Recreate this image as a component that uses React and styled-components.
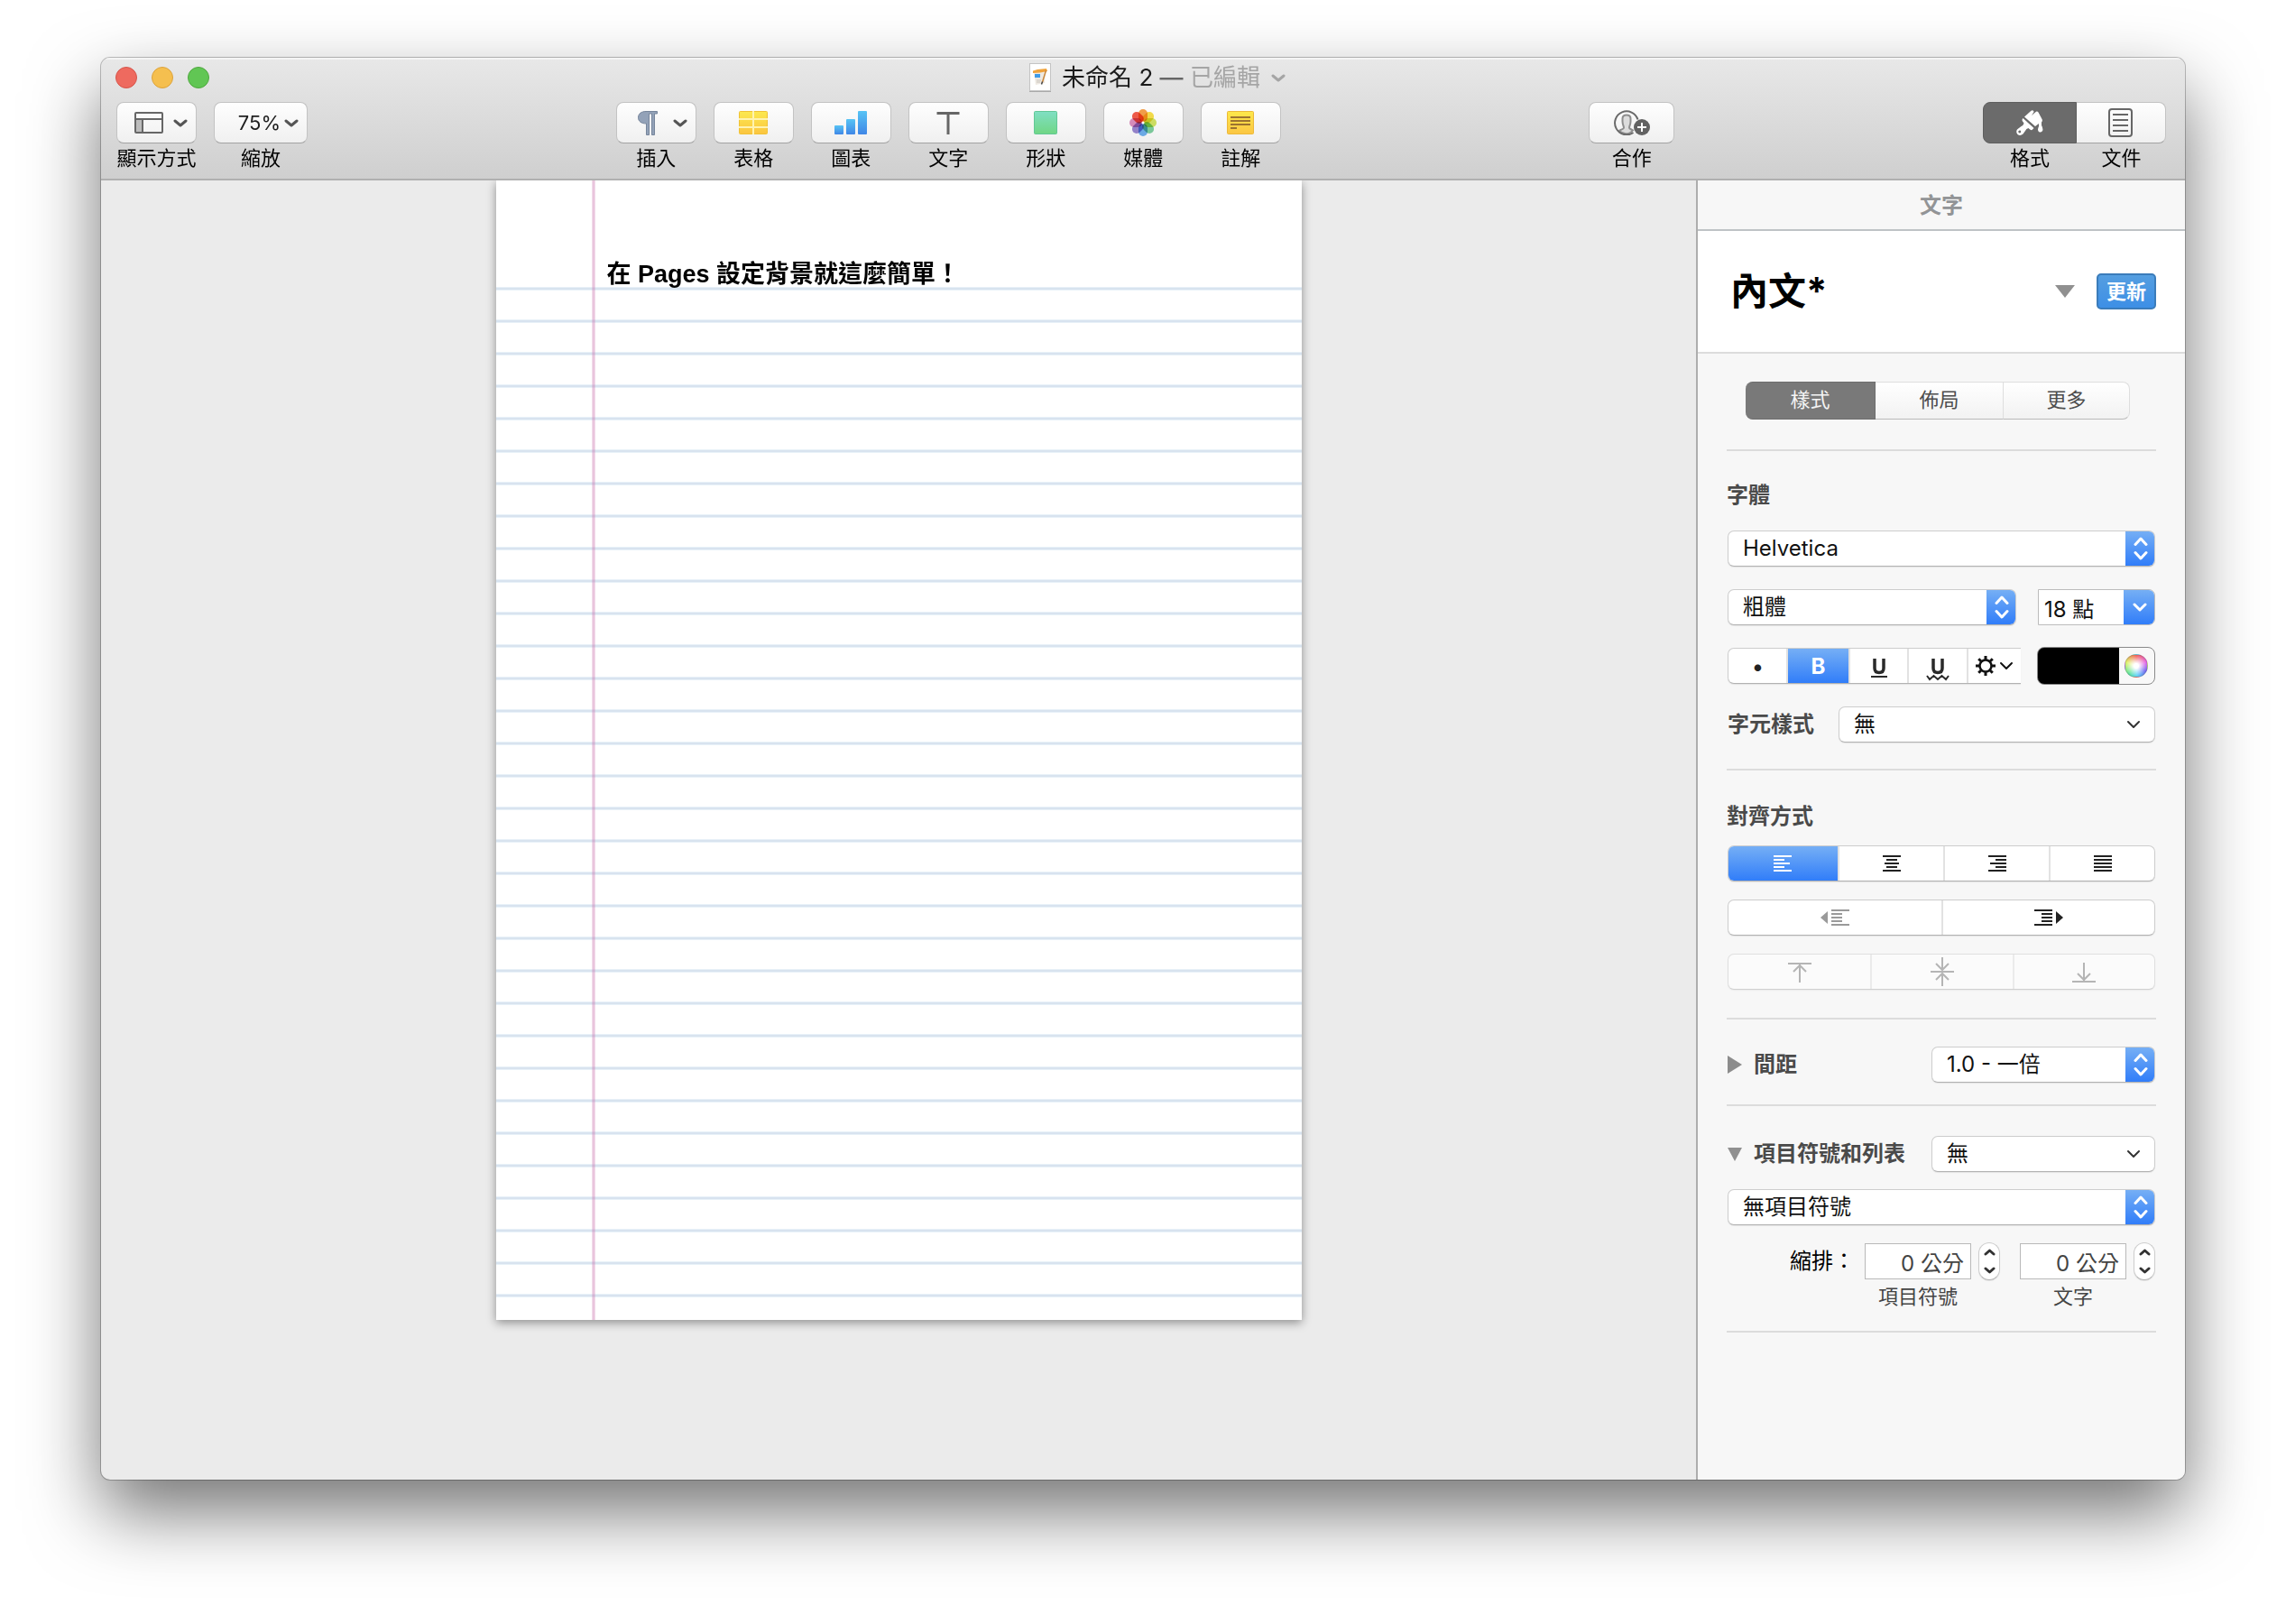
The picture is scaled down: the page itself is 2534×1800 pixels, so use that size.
import React, { useState } from 'react';
import styled, { createGlobalStyle, css } from 'styled-components';

const GlobalStyle = createGlobalStyle`
  * {
    box-sizing: border-box;
  }

  body {
    margin: 0;
    background: #fff;
    color: #000;
    font-family: Inter, "Noto Sans CJK TC", sans-serif;
    font-size: 24px;
  }

  button, select, input {
    margin: 0;
    padding: 0;
    border: none;
    background: transparent;
    color: inherit;
    font: inherit;
    outline: none;
  }

  svg {
    display: block;
    flex: none;
  }
`;

const blueFill = css`
  background: linear-gradient(#77b0f5, #2f7cf9);
  box-shadow: inset 0 1px 0 #6ba4ee, inset 0 -1px 0 #1f63ee;
`;

const controlEdge = css`
  background: #fff;
  border: 1px solid #cdcdcd;
  border-bottom-color: #b2b2b2;
  border-radius: 7px;
  box-shadow: 0 1px 1px rgba(0, 0, 0, 0.08);
`;

/* window */

const Desktop = styled.div`
  display: flex;
  min-height: 100vh;
  padding: 64px 112px 160px;
`;

const Window = styled.div`
  display: flex;
  flex-direction: column;
  flex: 1;
  min-width: 0;
  overflow: hidden;
  border-radius: 10px;
  background: #ebebeb;
  box-shadow: 0 0 0 1px rgba(0, 0, 0, 0.24), 0 36px 80px rgba(0, 0, 0, 0.55);
`;

const Header = styled.header`
  padding-bottom: 9px;
  background: linear-gradient(#e8e8e8, #cfcfcf);
  border-bottom: 2px solid #b0b0b0;
  box-shadow: inset 0 2px 0 #f4f4f4;
`;

const TitleBar = styled.div`
  display: grid;
  grid-template-columns: 1fr auto 1fr;
  align-items: center;
  height: 44px;
  padding: 0 16px;
`;

const Lights = styled.div`
  display: flex;
  gap: 16px;
`;

const Light = styled.button`
  width: 24px;
  height: 24px;
  border: 1px solid ${props => props.$edge};
  border-radius: 50%;
  background: ${props => props.$fill};
`;

const Title = styled.div`
  display: flex;
  align-items: center;
  gap: 12px;
  padding-left: 32px;
  font-size: 26px;
  line-height: 36px;
  color: #1a1a1a;
  white-space: pre;
`;

const Dash = styled.span`
  font-weight: 500;
  color: #666;
`;

const Edited = styled.span`
  color: #a5a5a5;
`;

const Toolbar = styled.div`
  display: flex;
  justify-content: space-between;
  padding: 5px 21px 0 17px;
`;

const ToolGroup = styled.div`
  display: flex;
  gap: ${props => props.$gap}px;
`;

const ToolItem = styled.div`
  display: flex;
  flex-direction: column;
  align-items: center;
  gap: 2px;
`;

const ToolButton = styled.button`
  display: flex;
  align-items: center;
  justify-content: ${props => (props.$menu ? 'flex-end' : 'center')};
  gap: ${props => props.$gap || 0}px;
  width: ${props => props.$width || 89}px;
  height: 46px;
  padding: ${props => (props.$menu ? '0 9px' : '0')};
  border: 1px solid #c3c3c3;
  border-bottom-color: #a3a3a3;
  border-radius: 8px;
  background: linear-gradient(#fefefe, #f0f0f0);
  font-size: 22px;
  line-height: 28px;
  color: #1e1e1e;

  ${props => props.$side === 'left' && css`
    border-color: #5e5e5e;
    border-radius: 8px 0 0 8px;
    background: #6b6b6b;
  `}
  ${props => props.$side === 'right' && css`
    border-left: none;
    border-radius: 0 8px 8px 0;
  `}
`;

const ToolLabel = styled.label`
  font-size: 22px;
  line-height: 28px;
  white-space: nowrap;
`;

/* document */

const Body = styled.div`
  display: flex;
  flex: 1;
`;

const Canvas = styled.main`
  display: flex;
  justify-content: center;
  align-items: flex-start;
  flex: 1;
  min-width: 0;
  overflow: hidden;
`;

const Paper = styled.article`
  width: 893px;
  height: 1263px;
  padding: 86px 40px 0 123px;
  background:
    linear-gradient(90deg, transparent 106px, rgba(200, 110, 170, 0.25) 106px, rgba(200, 110, 170, 0.25) 107px, rgba(200, 110, 170, 0.4) 107px, rgba(200, 110, 170, 0.4) 109px, rgba(200, 110, 170, 0.25) 109px, rgba(200, 110, 170, 0.25) 110px, transparent 110px),
    repeating-linear-gradient(#e8f1f8 0 1px, #d8e3ef 1px 3px, #e8f1f8 3px 4px, transparent 4px 36px) 0 118px no-repeat,
    #fff;
  box-shadow: 0 3px 10px rgba(0, 0, 0, 0.4);
`;

const Paragraph = styled.p`
  margin: 0;
  font-family: "Liberation Sans", "Noto Sans CJK TC", sans-serif;
  font-size: 27px;
  font-weight: 700;
  line-height: 36px;
`;

/* inspector */

const Inspector = styled.aside`
  flex: none;
  width: 542px;
  border-left: 2px solid #adadad;
  background: #f7f7f7;
`;

const InspectorTitle = styled.h2`
  height: 56px;
  margin: 0;
  border-bottom: 2px solid #bfc3c6;
  font-size: 24px;
  font-weight: 700;
  line-height: 56px;
  text-align: center;
  color: #929496;
`;

const StyleBar = styled.div`
  display: flex;
  align-items: center;
  height: 136px;
  padding: 0 32px 0 36px;
  border-bottom: 2px solid #dcdcdc;
  background: #fff;
`;

const StyleName = styled.span`
  flex: 1;
  font-size: 42px;
  font-weight: 700;
  line-height: 60px;
`;

const UpdateButton = styled.button`
  width: 66px;
  height: 40px;
  margin-left: 24px;
  border: 2px solid #3b7cba;
  border-radius: 5px;
  background: linear-gradient(#559ee0, #3d8fe6);
  font-size: 22px;
  font-weight: 700;
  line-height: 32px;
  color: #fff;
`;

const Panel = styled.div`
  padding: 0 32px;
`;

const Tabs = styled.div`
  display: grid;
  grid-template-columns: 144px 142px 1fr;
  margin: 31px 29px 33px 21px;
`;

const Tab = styled.button`
  height: 42px;
  padding-bottom: 3px;
  border: 1px solid #dedede;
  border-bottom-color: #bababa;
  border-left-width: 0;
  background: linear-gradient(#fff, #f2f2f2);
  font-size: 22px;
  line-height: 36px;
  color: #4d4d4d;

  &:first-child {
    border-radius: 8px 0 0 8px;
  }

  &:last-child {
    border-radius: 0 8px 8px 0;
  }

  ${props => props.$active && css`
    border-color: #6e6e6e;
    background: #797979;
    color: #f4f4f4;
  `}
`;

const Section = styled.section`
  padding: ${props => props.$pad};
  border-top: 2px solid #dcdcdc;
`;

const Heading = styled.h3`
  margin: 0 0 ${props => props.$gap}px;
  font-size: 24px;
  font-weight: 700;
  line-height: 36px;
  color: #4a4a4a;
`;

const Rows = styled.div`
  display: flex;
  flex-direction: column;
  gap: ${props => props.$gap}px;
  padding: 0 1px;
`;

const Row = styled.div`
  display: flex;
  align-items: center;
  justify-content: space-between;
  gap: ${props => props.$gap || 0}px;
  height: ${props => props.$height || 40}px;
`;

const RowLabel = styled.label`
  font-weight: 700;
  line-height: 36px;
  color: #4a4a4a;
  white-space: nowrap;
`;

const Disclosure = styled.button`
  display: flex;
  align-items: center;
  gap: 13px;
  font-weight: 700;
  line-height: 36px;
  color: #4a4a4a;
  white-space: nowrap;

  svg {
    width: 16px;
  }
`;

const SelectBox = styled.div`
  ${controlEdge}
  display: flex;
  align-items: stretch;
  flex: ${props => (props.$width ? 'none' : 1)};
  width: ${props => (props.$width ? `${props.$width}px` : 'auto')};
  height: 40px;
  overflow: hidden;
`;

const Select = styled.select`
  flex: 1;
  min-width: 0;
  padding-left: 16px;
  appearance: none;
  line-height: 36px;
  color: #111;
`;

const BlueCap = styled.span`
  ${blueFill}
  display: flex;
  align-items: center;
  justify-content: center;
  width: 33px;
  margin: -1px -1px -1px 0;
`;

const PlainCap = styled.span`
  display: flex;
  align-items: center;
  padding-right: 15px;
`;

const ComboBox = styled.div`
  display: flex;
  width: 130px;
  height: 40px;
  border: 1px solid #bcbcbc;
  border-radius: 0 7px 7px 0;
  background: #fff;
  overflow: hidden;
`;

const ComboInput = styled.input`
  flex: 1;
  width: 0;
  padding-left: 6px;
  color: #111;
`;

const ComboButton = styled.button`
  ${blueFill}
  display: flex;
  align-items: center;
  justify-content: center;
  width: 35px;
  margin: -1px -1px -1px 0;
`;

const Segments = styled.div`
  ${controlEdge}
  display: grid;
  grid-template-columns: ${props => props.$cols};
  flex: 1 1 auto;
  height: 40px;
  overflow: hidden;
  opacity: ${props => (props.$disabled ? 0.55 : 1)};

  ${props => props.$cut && css`
    border-right: none;
    border-radius: 7px 0 0 7px;
  `}
`;

const Segment = styled.button`
  display: flex;
  align-items: center;
  justify-content: center;
  gap: 4px;
  color: ${props => (props.$muted ? '#9a9a9a' : '#222')};
  font-weight: 700;

  & + & {
    border-left: 2px solid #e2e2e2;
  }

  ${props => props.$active && css`
    ${blueFill}
    margin: -1px 0 -1px -1px;
    color: #fff;

    && {
      border-left: none;
    }

    && + * {
      border-left: none;
    }
  `}
`;

const ColorWell = styled.button`
  display: flex;
  align-items: center;
  justify-content: flex-end;
  width: 131px;
  height: 42px;
  padding-right: 7px;
  border: 1px solid #8a8a8a;
  border-radius: 8px;
  background: linear-gradient(90deg, #000 90px, #f8f8f8 90px);
`;

const Wheel = styled.span`
  width: 26px;
  height: 26px;
  border: 1px solid rgba(120, 120, 120, 0.35);
  border-radius: 50%;
  background:
    radial-gradient(#fff 15%, rgba(255, 255, 255, 0) 78%),
    conic-gradient(#f0443a, #e04be0 70deg, #5a4ff0 120deg, #38c8f5 175deg, #46e08a 225deg, #d8f04a 290deg, #f0443a);
`;

const IndentRow = styled.div`
  display: flex;
  align-items: flex-start;
  justify-content: flex-end;
`;

const IndentLabel = styled.span`
  margin-right: 11px;
  line-height: 42px;
`;

const IndentField = styled.div`
  display: grid;
  grid-template-columns: 118px 24px;
  column-gap: 8px;
  row-gap: 4px;
  align-items: center;

  & + & {
    margin-left: 22px;
  }
`;

const IndentInput = styled.input`
  width: 100%;
  height: 40px;
  padding-right: 7px;
  border: 1px solid #b9b9b9;
  background: #fff;
  text-align: right;
  color: #444;
`;

const IndentCaption = styled.label`
  font-size: 22px;
  line-height: 28px;
  text-align: center;
  color: #444;
`;

const StepperBox = styled.div`
  ${controlEdge}
  display: flex;
  flex-direction: column;
  height: 42px;
  border-radius: 12px;

  button {
    display: flex;
    flex: 1;
    align-items: center;
    justify-content: center;
  }
`;

/* icons */

const Chevron = ({ width = 16, height = 9, color = '#555', stroke = 3, up = false }) => (
  <svg width={width} height={height} viewBox={`0 0 ${width} ${height}`} fill="none" stroke={color} strokeWidth={stroke} strokeLinecap="round" strokeLinejoin="round">
    <path d={up
      ? `M2 ${height - 2}L${width / 2} 2L${width - 2} ${height - 2}`
      : `M2 2L${width / 2} ${height - 2}L${width - 2} 2`} />
  </svg>
);

const UpDown = () => (
  <svg width="16" height="28" viewBox="0 0 16 28" fill="none" stroke="#fff" strokeWidth="3" strokeLinecap="round" strokeLinejoin="round">
    <path d="M2 9.500L8 3L14 9.500M2 18.500L8 25L14 18.500" />
  </svg>
);

const DownTriangle = ({ width = 22, height = 14 }) => (
  <svg width={width} height={height} viewBox="0 0 22 14" preserveAspectRatio="none" fill="#909090"><path d="M0 0H22L11 14Z" /></svg>
);

const RightTriangle = () => (
  <svg width="16" height="20" viewBox="0 0 16 20" fill="#8c8c8c"><path d="M0 0L16 10L0 20Z" /></svg>
);

const PagesDocIcon = () => (
  <svg width="24" height="32" viewBox="0 0 24 32">
    <rect x="0.500" y="0.500" width="23" height="30" fill="#fff" stroke="#c4c4c4" />
    <path d="M0 31.500H24" stroke="#aaa" />
    <path d="M5 10L18 8L17 22L7 24Z" fill="#eee9e2" />
    <path d="M4 8.500L9 7L19 6L20 9L12 10.500L4 11Z" fill="#f0a33c" />
    <rect x="6" y="12" width="6" height="4" fill="#3f9be8" />
    <path d="M8 19H13M8 21H12" stroke="#c9c4bd" />
    <path d="M18.500 8L14.500 21" stroke="#c9863a" strokeWidth="1.500" />
    <path d="M14.500 20.500L13.500 23.500" stroke="#444" strokeWidth="1.500" />
  </svg>
);

const ViewIcon = () => (
  <svg width="32" height="24" viewBox="0 0 32 24" fill="none" stroke="#666" strokeWidth="2">
    <path d="M2 8H9V22H2Z" fill="#bcbcbc" stroke="none" />
    <rect x="1" y="1" width="30" height="22" rx="1" />
    <path d="M1 8H31M9 8V23" />
  </svg>
);

const PilcrowIcon = () => (
  <svg width="22" height="27" viewBox="0 0 22 27">
    <path d="M9 0.500H21.500V3H18.500V26.500H15.500V3H12.500V26.500H9.500V14C4 14 0.500 11.500 0.500 7.300C0.500 3 4 0.500 9 0.500Z" fill="#93a2b8" stroke="#76859b" />
  </svg>
);

const TableIcon = () => (
  <svg width="32" height="26" viewBox="0 0 32 26">
    <defs>
      <linearGradient id="table-fill" x1="0" y1="0" x2="0" y2="1">
        <stop offset="0" stopColor="#fce94f" />
        <stop offset="1" stopColor="#fbc540" />
      </linearGradient>
    </defs>
    <rect x="0.500" y="0.500" width="31" height="25" rx="1" fill="url(#table-fill)" stroke="#f0c236" />
    <path d="M16 0V26M0 9H32M0 18H32" stroke="#fff3b0" strokeWidth="2" />
  </svg>
);

const ChartIcon = () => (
  <svg width="36" height="26" viewBox="0 0 36 26">
    <defs>
      <linearGradient id="bar-fill" x1="0" y1="0" x2="0" y2="1">
        <stop offset="0" stopColor="#57c4f5" />
        <stop offset="1" stopColor="#3f86e6" />
      </linearGradient>
    </defs>
    <g fill="url(#bar-fill)">
      <rect x="0" y="16" width="10" height="10" rx="1" />
      <rect x="13" y="9" width="10" height="17" rx="1" />
      <rect x="26" y="0" width="10" height="26" rx="1" />
    </g>
  </svg>
);

const TextIcon = () => (
  <svg width="26" height="25" viewBox="0 0 26 25" fill="none" stroke="#666" strokeWidth="3">
    <path d="M0.500 1.500H25.500M13 1.500V25" />
  </svg>
);

const ShapeIcon = () => (
  <svg width="26" height="26" viewBox="0 0 26 26">
    <defs>
      <linearGradient id="shape-fill" x1="0" y1="0" x2="0" y2="1">
        <stop offset="0" stopColor="#80dfc4" />
        <stop offset="1" stopColor="#70d684" />
      </linearGradient>
    </defs>
    <rect x="0.500" y="0.500" width="25" height="25" rx="1" fill="url(#shape-fill)" stroke="#62c896" />
  </svg>
);

const petals = ['#f5a04a', '#f7df4c', '#d3e465', '#7fd0a0', '#70b2f0', '#9a88d2', '#dc90c0', '#f25c4a'];

const MediaIcon = () => (
  <svg width="32" height="32" viewBox="-16 -16 32 32">
    {petals.map((color, i) => (
      <rect
        key={color}
        x="-5"
        y="-15"
        width="10"
        height="14"
        rx="5"
        fill={color}
        style={{ mixBlendMode: 'multiply' }}
        transform={`rotate(${i * 45})`}
      />
    ))}
    <circle r="1.500" fill="#fff" />
  </svg>
);

const CommentIcon = () => (
  <svg width="30" height="26" viewBox="0 0 30 26">
    <defs>
      <linearGradient id="note-fill" x1="0" y1="0" x2="0" y2="1">
        <stop offset="0" stopColor="#fde84a" />
        <stop offset="1" stopColor="#fbc644" />
      </linearGradient>
    </defs>
    <rect x="0.500" y="0.500" width="29" height="25" rx="1" fill="url(#note-fill)" stroke="#ecb93a" />
    <path d="M4 7H26M4 11H26M4 15H26M4 19H11" stroke="#9c7330" strokeWidth="2" />
  </svg>
);

const CollaborateIcon = () => (
  <svg width="40" height="28" viewBox="0 0 40 28" fill="none" stroke="#6a6a6a" strokeWidth="2">
    <path d="M6 23C8 21 11 21.500 11 19.500C11 18 9.500 16 9.500 12.500V9.500C9.500 7 11.500 5.500 14 5.500C16.500 5.500 18.500 7 18.500 9.500V12.500C18.500 16 17 18 17 19.500C17 21 19 21 21 22.500C17 27.500 10 27.500 6 23Z" fill="#dcdcdc" stroke="#8e8e8e" />
    <path d="M21.500 25A13 13 0 1 1 26.500 10.500" />
    <circle cx="31" cy="19" r="9" fill="#626262" stroke="none" />
    <path d="M26 19H36M31 14V24" stroke="#fff" />
  </svg>
);

const BrushIcon = () => (
  <svg width="30" height="28" viewBox="0 0 30 28" fill="#fff">
    <path d="M9 7.500L16.500 0.800Q18 -0.200 19.200 1L19.500 2L17 6L22 1.800Q23.500 1.200 24.500 2.500L28.500 10Q29.500 12 28 13.500V17Q29.800 20 29.300 22.500Q28 25.500 25 24Q23 22 25 18V15L21 18Z" />
    <path fillRule="evenodd" d="M7.500 9L19.500 20L17.500 22Q16 22.500 14.500 21L13.500 20Q11 20.500 10 23L7.500 26.500Q4.500 29 1.500 27Q-0.800 24.500 1 21.500L5.500 18Q8 17 8.500 14.500L7 12.500Q5.800 10.500 7.500 9ZM3.700 22.500A1.500 1.500 0 1 0 3.800 25.500A1.500 1.500 0 1 0 3.700 22.500Z" />
  </svg>
);

const DocumentIcon = () => (
  <svg width="27" height="32" viewBox="0 0 27 32" fill="none" stroke="#666" strokeWidth="2">
    <rect x="1" y="1" width="25" height="30" rx="3" />
    <path d="M5 7H22M5 13H22M5 19H22M5 25H22" />
  </svg>
);

const alignPaths = {
  left: 'M0 1H20M0 5H12M0 9H18M0 13H12M0 17H20',
  center: 'M0 1H20M4 5H16M2 9H18M4 13H16M0 17H20',
  right: 'M0 1H20M8 5H20M2 9H20M8 13H20M0 17H20',
  justify: 'M0 1H20M0 5H20M0 9H20M0 13H20M0 17H20',
  outdent: 'M0 1H20M0 5H12M0 9H12M0 13H12M0 17H20',
  indent: 'M0 1H20M8 5H20M8 9H20M8 13H20M0 17H20',
};

const LinesIcon = ({ kind }) => (
  <svg width="20" height="18" viewBox="0 0 20 18" stroke="currentColor" strokeWidth="2"><path d={alignPaths[kind]} /></svg>
);

const Arrowhead = ({ left }) => (
  <svg width="8" height="14" viewBox="0 0 8 14" fill="currentColor"><path d={left ? 'M8 0V14L0 7Z' : 'M0 0V14L8 7Z'} /></svg>
);

const vAlignPaths = {
  top: 'M5 9H31M18 30V10M11 18L18 11L25 18',
  middle: 'M5 18H31M18 2V16M11 9L18 16L25 9M18 34V20M11 27L18 20L25 27',
  bottom: 'M5 29H31M18 8V28M11 20L18 27L25 20',
};

const VAlignIcon = ({ kind }) => (
  <svg width="36" height="36" viewBox="0 0 36 36" fill="none" stroke="#808080" strokeWidth="2"><path d={vAlignPaths[kind]} /></svg>
);

const UnderlineIcon = ({ wavy }) => (
  <svg width="26" height="34" viewBox="0 0 26 34" fill="none" stroke="#2a2a2a">
    <path d="M8 9V19.500Q8 24.500 13 24.500Q18 24.500 18 19.500V9" strokeWidth="3.500" />
    {wavy
      ? <path d="M1 28L4 32L8.500 28L13 32L17.500 28L22 32L25 28" strokeWidth="2" />
      : <path d="M4 29H22" strokeWidth="2" />}
  </svg>
);

const GearIcon = () => (
  <svg width="22" height="22" viewBox="-11 -11 22 22" fill="none" stroke="#111">
    <circle r="6.500" strokeWidth="2.500" />
    {[0, 45, 90, 135, 180, 225, 270, 315].map(angle => (
      <path key={angle} d="M0 -7V-11" strokeWidth="3" transform={`rotate(${angle})`} />
    ))}
  </svg>
);

/* parts */

const Tool = ({ id, label, children, ...rest }) => (
  <ToolItem>
    <ToolButton id={id} type="button" {...rest}>{children}</ToolButton>
    <ToolLabel htmlFor={id}>{label}</ToolLabel>
  </ToolItem>
);

const PopUp = ({ id, label, value, width, plain }) => (
  <SelectBox $width={width}>
    <Select id={id} aria-label={label} defaultValue={value}>
      <option>{value}</option>
    </Select>
    {plain
      ? <PlainCap><Chevron height={10} stroke={2} color="#333" /></PlainCap>
      : <BlueCap><UpDown /></BlueCap>}
  </SelectBox>
);

const Indent = ({ id, caption }) => {
  const [value, setValue] = useState(0);
  return (
    <IndentField>
      <IndentInput id={id} type="text" value={`${value} 公分`} readOnly />
      <StepperBox>
        <button type="button" aria-label={`增加${caption}`} onClick={() => setValue(value + 1)}>
          <Chevron width={13} height={8} color="#333" up />
        </button>
        <button type="button" aria-label={`減少${caption}`} onClick={() => setValue(Math.max(0, value - 1))}>
          <Chevron width={13} height={8} color="#333" />
        </button>
      </StepperBox>
      <IndentCaption htmlFor={id}>{caption}</IndentCaption>
    </IndentField>
  );
};

const App = () => {
  const [tab, setTab] = useState('樣式');
  const [align, setAlign] = useState('left');

  return (
    <>
      <GlobalStyle />
      <Desktop>
        <Window>
          <Header>
            <TitleBar>
              <Lights>
                <Light type="button" aria-label="關閉" $fill="#ee6a5f" $edge="#d5544a" />
                <Light type="button" aria-label="縮到最小" $fill="#f5bf4f" $edge="#dba23c" />
                <Light type="button" aria-label="全螢幕" $fill="#61c654" $edge="#4fa73f" />
              </Lights>
              <Title>
                <PagesDocIcon />
                <span>未命名 2 <Dash>—</Dash> <Edited>已編輯</Edited></span>
                <Chevron color="#a5a5a5" />
              </Title>
            </TitleBar>
            <Toolbar>
              <ToolGroup $gap={19}>
                <Tool id="view" label="顯示方式" $menu $gap={11}><ViewIcon /><Chevron /></Tool>
                <Tool id="zoom" label="縮放" $menu $gap={4} $width={104}>75%<Chevron /></Tool>
              </ToolGroup>
              <ToolGroup $gap={19}>
                <Tool id="insert" label="插入" $menu $gap={17}><PilcrowIcon /><Chevron /></Tool>
                <Tool id="table" label="表格"><TableIcon /></Tool>
                <Tool id="chart" label="圖表"><ChartIcon /></Tool>
                <Tool id="text" label="文字"><TextIcon /></Tool>
                <Tool id="shape" label="形狀"><ShapeIcon /></Tool>
                <Tool id="media" label="媒體"><MediaIcon /></Tool>
                <Tool id="comment" label="註解"><CommentIcon /></Tool>
              </ToolGroup>
              <Tool id="collaborate" label="合作" $width={95}><CollaborateIcon /></Tool>
              <ToolGroup $gap={0}>
                <Tool id="format" label="格式" $width={104} $side="left"><BrushIcon /></Tool>
                <Tool id="document" label="文件" $width={99} $side="right"><DocumentIcon /></Tool>
              </ToolGroup>
            </Toolbar>
          </Header>

          <Body>
            <Canvas>
              <Paper>
                <Paragraph>在 Pages 設定背景就這麼簡單！</Paragraph>
              </Paper>
            </Canvas>

            <Inspector>
              <InspectorTitle>文字</InspectorTitle>
              <StyleBar>
                <StyleName>內文*</StyleName>
                <button type="button" aria-label="段落樣式"><DownTriangle /></button>
                <UpdateButton type="button">更新</UpdateButton>
              </StyleBar>
              <Panel>
                <Tabs>
                  {['樣式', '佈局', '更多'].map(name => (
                    <Tab key={name} type="button" $active={tab === name} onClick={() => setTab(name)}>{name}</Tab>
                  ))}
                </Tabs>

                <Section $pad="31px 0 28px">
                  <Heading $gap={20}>字體</Heading>
                  <Rows $gap={23}>
                    <Row $height={42}>
                      <PopUp label="字體" value="Helvetica" />
                    </Row>
                    <Row $height={42} $gap={24}>
                      <PopUp label="字體樣式" value="粗體" />
                      <ComboBox>
                        <ComboInput type="text" aria-label="字體大小" defaultValue="18 點" />
                        <ComboButton type="button" aria-label="選擇大小"><Chevron color="#fff" height={10} /></ComboButton>
                      </ComboBox>
                    </Row>
                    <Row $height={42} $gap={18}>
                      <Segments $cols="65px 68px 65px 66px 1fr" $cut>
                        <Segment type="button">•</Segment>
                        <Segment type="button" $active>B</Segment>
                        <Segment type="button" aria-label="底線"><UnderlineIcon /></Segment>
                        <Segment type="button" aria-label="波浪底線"><UnderlineIcon wavy /></Segment>
                        <Segment type="button" aria-label="進階選項"><GearIcon /><Chevron height={10} stroke={2} color="#111" /></Segment>
                      </Segments>
                      <ColorWell type="button" aria-label="文字顏色"><Wheel /></ColorWell>
                    </Row>
                    <Row $height={42}>
                      <RowLabel htmlFor="char-style">字元樣式</RowLabel>
                      <PopUp id="char-style" value="無" width={351} plain />
                    </Row>
                  </Rows>
                </Section>

                <Section $pad="33px 0 31px">
                  <Heading $gap={14}>對齊方式</Heading>
                  <Rows $gap={20}>
                    <Segments $cols="121px 1fr 1fr 1fr">
                      {['left', 'center', 'right', 'justify'].map(kind => (
                        <Segment key={kind} type="button" aria-label={kind} $active={align === kind} onClick={() => setAlign(kind)}>
                          <LinesIcon kind={kind} />
                        </Segment>
                      ))}
                    </Segments>
                    <Segments $cols="1fr 1fr">
                      <Segment type="button" aria-label="減少縮排" $muted><Arrowhead left /><LinesIcon kind="outdent" /></Segment>
                      <Segment type="button" aria-label="增加縮排"><LinesIcon kind="indent" /><Arrowhead /></Segment>
                    </Segments>
                    <Segments $cols="1fr 1fr 1fr" $disabled>
                      <Segment type="button" aria-label="靠上" disabled><VAlignIcon kind="top" /></Segment>
                      <Segment type="button" aria-label="置中" disabled><VAlignIcon kind="middle" /></Segment>
                      <Segment type="button" aria-label="靠下" disabled><VAlignIcon kind="bottom" /></Segment>
                    </Segments>
                  </Rows>
                </Section>

                <Section $pad="30px 0 24px">
                  <Rows $gap={20}>
                    <Row>
                      <Disclosure type="button"><RightTriangle />間距</Disclosure>
                      <PopUp label="間距" value="1.0 - 一倍" width={248} />
                    </Row>
                  </Rows>
                </Section>

                <Section $pad="33px 0 24px">
                  <Rows $gap={19}>
                    <Row>
                      <Disclosure type="button"><DownTriangle width={16} height={15} />項目符號和列表</Disclosure>
                      <PopUp label="項目符號和列表" value="無" width={248} plain />
                    </Row>
                    <Row>
                      <PopUp label="項目符號類型" value="無項目符號" />
                    </Row>
                    <IndentRow>
                      <IndentLabel>縮排：</IndentLabel>
                      <Indent id="bullet-indent" caption="項目符號" />
                      <Indent id="text-indent" caption="文字" />
                    </IndentRow>
                  </Rows>
                </Section>
                <Section $pad="0" />
              </Panel>
            </Inspector>
          </Body>
        </Window>
      </Desktop>
    </>
  );
};

export default App;
